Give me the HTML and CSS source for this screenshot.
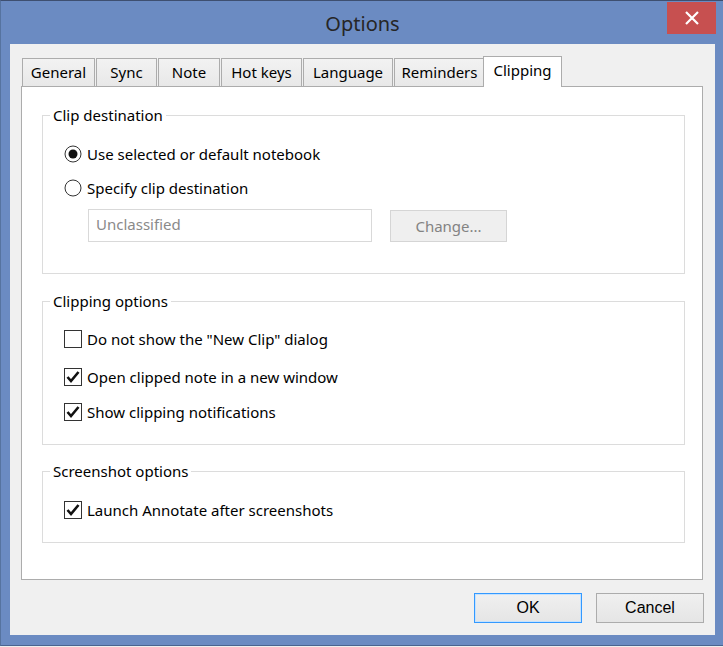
FILE: index.html
```html
<!DOCTYPE html>
<html>
<head>
<meta charset="utf-8">
<title>Options</title>
<link rel="stylesheet" href="styles.css">
</head>
<body>
<div class="window">
  <div class="titlebar">
    <div class="title-spacer"></div>
    <div class="title">Options</div>
    <div class="close-wrap">
      <div class="close">
        <svg width="16" height="14" viewBox="0 0 16 14"><path d="M2 1 L14 13 M14 1 L2 13" stroke="#fff" stroke-width="2.2" fill="none"/></svg>
      </div>
    </div>
  </div>
  <div class="client">
    <div class="tabstrip">
      <div class="tab tab-general">General</div>
      <div class="tab tab-sync">Sync</div>
      <div class="tab tab-note">Note</div>
      <div class="tab tab-hotkeys">Hot keys</div>
      <div class="tab tab-language">Language</div>
      <div class="tab tab-reminders">Reminders</div>
      <div class="tab tab-clipping selected">Clipping</div>
    </div>
    <div class="panel">
      <fieldset class="group group-dest">
        <legend>Clip destination</legend>
        <div class="row">
          <svg class="radio" width="18" height="18" viewBox="0 0 18 18"><circle cx="9" cy="9" r="8" fill="#fff" stroke="#333" stroke-width="1"/><circle cx="9" cy="9" r="4.5" fill="#111"/></svg>
          <span class="label">Use selected or default notebook</span>
        </div>
        <div class="row row-gap">
          <svg class="radio" width="18" height="18" viewBox="0 0 18 18"><circle cx="9" cy="9" r="8" fill="#fff" stroke="#333" stroke-width="1"/></svg>
          <span class="label">Specify clip destination</span>
        </div>
        <div class="dest-row">
          <div class="textbox">Unclassified</div>
          <div class="btn btn-disabled">Change...</div>
        </div>
      </fieldset>
      <fieldset class="group group-clip">
        <legend>Clipping options</legend>
        <div class="row">
          <svg class="check" width="18" height="18" viewBox="0 0 18 18"><rect x="0.5" y="0.5" width="17" height="17" fill="#fff" stroke="#333"/></svg>
          <span class="label">Do not show the "New Clip" dialog</span>
        </div>
        <div class="row row-gap2">
          <svg class="check" width="18" height="18" viewBox="0 0 18 18"><rect x="0.5" y="0.5" width="17" height="17" fill="#fff" stroke="#333"/><path d="M3.5 9 L7 13 L14.5 4" stroke="#111" stroke-width="2.6" fill="none"/></svg>
          <span class="label">Open clipped note in a new window</span>
        </div>
        <div class="row row-gap3">
          <svg class="check" width="18" height="18" viewBox="0 0 18 18"><rect x="0.5" y="0.5" width="17" height="17" fill="#fff" stroke="#333"/><path d="M3.5 9 L7 13 L14.5 4" stroke="#111" stroke-width="2.6" fill="none"/></svg>
          <span class="label">Show clipping notifications</span>
        </div>
      </fieldset>
      <fieldset class="group group-shot">
        <legend>Screenshot options</legend>
        <div class="row">
          <svg class="check" width="18" height="18" viewBox="0 0 18 18"><rect x="0.5" y="0.5" width="17" height="17" fill="#fff" stroke="#333"/><path d="M3.5 9 L7 13 L14.5 4" stroke="#111" stroke-width="2.6" fill="none"/></svg>
          <span class="label">Launch Annotate after screenshots</span>
        </div>
      </fieldset>
    </div>
    <div class="buttons">
      <div class="btn btn-dialog btn-default">OK</div>
      <div class="btn btn-dialog">Cancel</div>
    </div>
  </div>
</div>
</body>
</html>
```
FILE: styles.css
```css
* { box-sizing: border-box; }
html, body {
  margin: 0;
  padding: 0;
  width: 723px;
  height: 647px;
  overflow: hidden;
  background: #eeeeee;
  font-family: "Segoe UI", "Noto Sans", "Open Sans", sans-serif;
}
.window {
  width: 723px;
  height: 646px;
  background: #6b8bc2;
  border-top: 1px solid #3e4f70;
  border-left: 1px solid #56739f;
  border-bottom: 1px solid #4a6490;
  padding: 0 8px 10px 9px;
  display: flex;
  flex-direction: column;
}
.titlebar {
  height: 43px;
  display: grid;
  grid-template-columns: 1fr auto 1fr;
  margin: 0 -8px 0 -9px;
}
.title {
  font-size: 20px;
  color: #262626;
  line-height: 26px;
  padding-top: 10px;
  padding-left: 1px;
}
.close-wrap {
  display: flex;
  justify-content: flex-end;
  padding-right: 7px;
  padding-top: 1px;
}
.close {
  width: 49px;
  height: 32px;
  background: #c75050;
  display: flex;
  align-items: center;
  justify-content: center;
}
.client {
  flex: 1;
  background: #f0f0f0;
  padding: 12px 12px 12px 11px;
  display: flex;
  flex-direction: column;
}
.tabstrip {
  display: flex;
  align-items: flex-end;
  padding-left: 1px;
  height: 30px;
  position: relative;
  z-index: 1;
}
.tab {
  height: 28px;
  border: 1px solid #acacac;
  border-bottom: none;
  background: linear-gradient(#f2f2f2, #e8e8e8);
  font-size: 15px;
  color: #000;
  text-align: center;
  line-height: 26px;
  margin-right: 1px;
}
.tab.selected {
  height: 31px;
  margin-bottom: -1px;
  margin-left: -3px;
  background: #fff;
  line-height: 26px;
}
.tab-general { width: 73px; }
.tab-sync { width: 61px; }
.tab-note { width: 62px; }
.tab-hotkeys { width: 81px; }
.tab-language { width: 90px; }
.tab-reminders { width: 91px; }
.tab-clipping { width: 79px; }
.panel {
  height: 494px;
  background: #fff;
  border: 1px solid #acacac;
  padding: 0 17px 0 20px;
}
.group {
  margin: 18px 0 0 0;
  border: 1px solid #dcdcdc;
  padding: 0 0 0 21px;
  min-width: 0;
}
.group legend {
  font-size: 15px;
  line-height: 20px;
  padding: 0 3px;
  margin-left: -14px;
  color: #000;
}
.group-dest { padding-top: 17px; padding-bottom: 31px; }
.group-clip { margin-top: 17px; padding-top: 16px; padding-bottom: 20px; }
.group-shot { margin-top: 16px; padding-top: 17px; padding-bottom: 20px; }
.row {
  display: flex;
  align-items: center;
  height: 24px;
}
.row-gap { margin-top: 10px; }
.row-gap2 { margin-top: 14px; }
.row-gap3 { margin-top: 11px; }
.radio, .check { flex: none; }
.label {
  margin-left: 5px;
  font-size: 15px;
  color: #000;
  white-space: nowrap;
}
.dest-row {
  display: flex;
  margin-top: 9px;
  margin-left: 24px;
  align-items: center;
}
.textbox {
  width: 284px;
  height: 33px;
  border: 1px solid #d9d9d9;
  background: #fff;
  color: #8a8a8a;
  font-size: 15px;
  line-height: 29px;
  padding-left: 7px;
}
.btn {
  display: flex;
  align-items: center;
  justify-content: center;
}
.btn-disabled {
  margin-left: 18px;
  width: 117px;
  height: 32px;
  border: 1px solid #d5d5d5;
  background: #efefef;
  color: #838383;
  font-size: 15px;
}
.buttons {
  display: flex;
  justify-content: flex-end;
  margin-top: 13px;
  gap: 14px;
  margin-right: -1px;
}
.btn-dialog {
  width: 108px;
  height: 30px;
  border: 1px solid #acacac;
  background: linear-gradient(#f0f0f0, #e5e5e5);
  font-family: "Liberation Sans", Arial, sans-serif;
  font-size: 16px;
  color: #000;
}
.btn-default {
  border: 1px solid #3399ff;
  box-shadow: inset 0 0 0 1px #c4e2ff;
}
```
